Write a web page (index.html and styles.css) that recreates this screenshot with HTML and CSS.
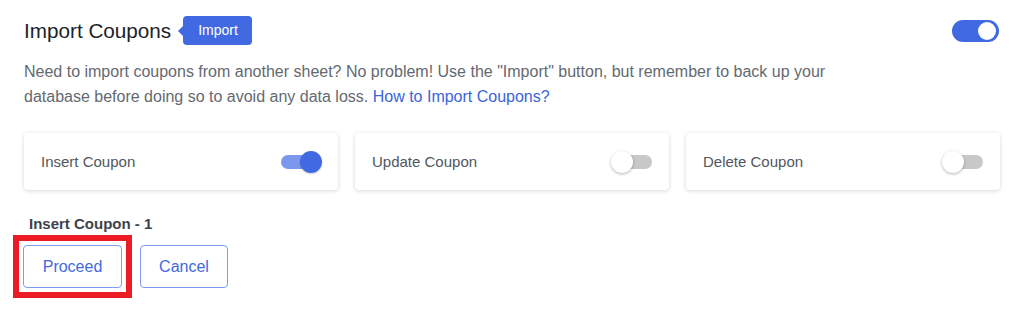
FILE: index.html
```html
<!DOCTYPE html>
<html>
<head>
<meta charset="utf-8">
<link rel="stylesheet" href="styles.css">
</head>
<body>
<div class="page">
  <div class="header">
    <div class="title-wrap">
      <h2 class="title">Import Coupons</h2>
      <span class="badge">Import</span>
    </div>
    <span class="toggle main on"><span class="knob"></span></span>
  </div>
  <p class="desc">Need to import coupons from another sheet? No problem! Use the "Import" button, but remember to back up your<br>database before doing so to avoid any data loss. <a class="link" href="#">How to Import Coupons?</a></p>
  <div class="cards">
    <div class="card"><span class="label">Insert Coupon</span><span class="switch on"><span class="dot"></span></span></div>
    <div class="card"><span class="label">Update Coupon</span><span class="switch"><span class="dot"></span></span></div>
    <div class="card"><span class="label">Delete Coupon</span><span class="switch"><span class="dot"></span></span></div>
  </div>
  <div class="summary">Insert Coupon - 1</div>
  <div class="actions">
    <span class="highlight-box"><button class="btn proceed">Proceed</button></span>
    <button class="btn cancel">Cancel</button>
  </div>
</div>
</body>
</html>
```
FILE: styles.css
```css
* { box-sizing: border-box; }
html, body { margin: 0; background: #fff; }
body { font-family: "Liberation Sans", Arial, sans-serif; }
.page { padding: 16px 24px 20px 24px; width: 1024px; }
.header { display: flex; align-items: center; justify-content: space-between; height: 29px; }
.title-wrap { display: flex; align-items: center; }
.title { margin: 0; font-size: 20.7px; font-weight: 400; color: #1d2327; line-height: 29px; }
.badge {
  position: relative; margin-left: 12px; background: #4169e1; color: #fff;
  font-size: 14px; height: 29px; line-height: 29px; padding: 0 14px 0 15px; border-radius: 4px;
}
.badge::before {
  content: ""; position: absolute; left: -5px; top: 50%; margin-top: -5px;
  border-style: solid; border-width: 5px 5px 5px 0; border-color: transparent #4169e1 transparent transparent;
}
.toggle { position: relative; width: 47px; height: 22px; border-radius: 11px; background: #4169e1; margin-right: 1px; }
.toggle .knob { position: absolute; right: 3px; top: 2px; width: 18px; height: 18px; border-radius: 50%; background: #fff; }
.desc { margin: 14px 0 0 0; font-size: 16px; line-height: 25px; color: #646970; white-space: nowrap; }
.link { color: #3b65dc; text-decoration: none; }
.cards { display: grid; grid-template-columns: repeat(3, 1fr); gap: 17px; margin-top: 24px; }
.card {
  height: 57px; background: #fff; border-radius: 4px; display: flex; align-items: center;
  justify-content: space-between; padding: 0 17px;
  box-shadow: 0 1px 4px rgba(0,0,0,0.16);
}
.label { font-size: 15px; color: #50575e; }
.switch { position: relative; width: 40px; height: 14px; border-radius: 7px; background: #c8c8c8; }
.switch .dot { position: absolute; left: -1px; top: -4px; width: 22px; height: 22px; border-radius: 50%; background: #fff; box-shadow: 0 1px 3px rgba(0,0,0,0.3); }
.switch.on { background: #7b98ee; }
.switch.on .dot { left: auto; right: -1px; background: #4169e1; box-shadow: 0 1px 2px rgba(0,0,0,0.2); }
.summary { margin: 25px 0 0 5px; font-size: 15px; font-weight: 700; color: #3c434a; }
.actions { display: flex; align-items: center; margin-top: 3px; }
.highlight-box { display: inline-flex; border: 6px solid #ec1c24; padding: 4px; margin: 0 -11px 0 -11px; }
.btn {
  font-family: "Liberation Sans", Arial, sans-serif; font-size: 16px; color: #4169e1;
  background: #fff; border: 1px solid #7d9cf0; border-radius: 4px; height: 43px; padding: 0; cursor: pointer;
}
.proceed { width: 99px; }
.cancel { width: 88px; margin-left: 19px; }
```
